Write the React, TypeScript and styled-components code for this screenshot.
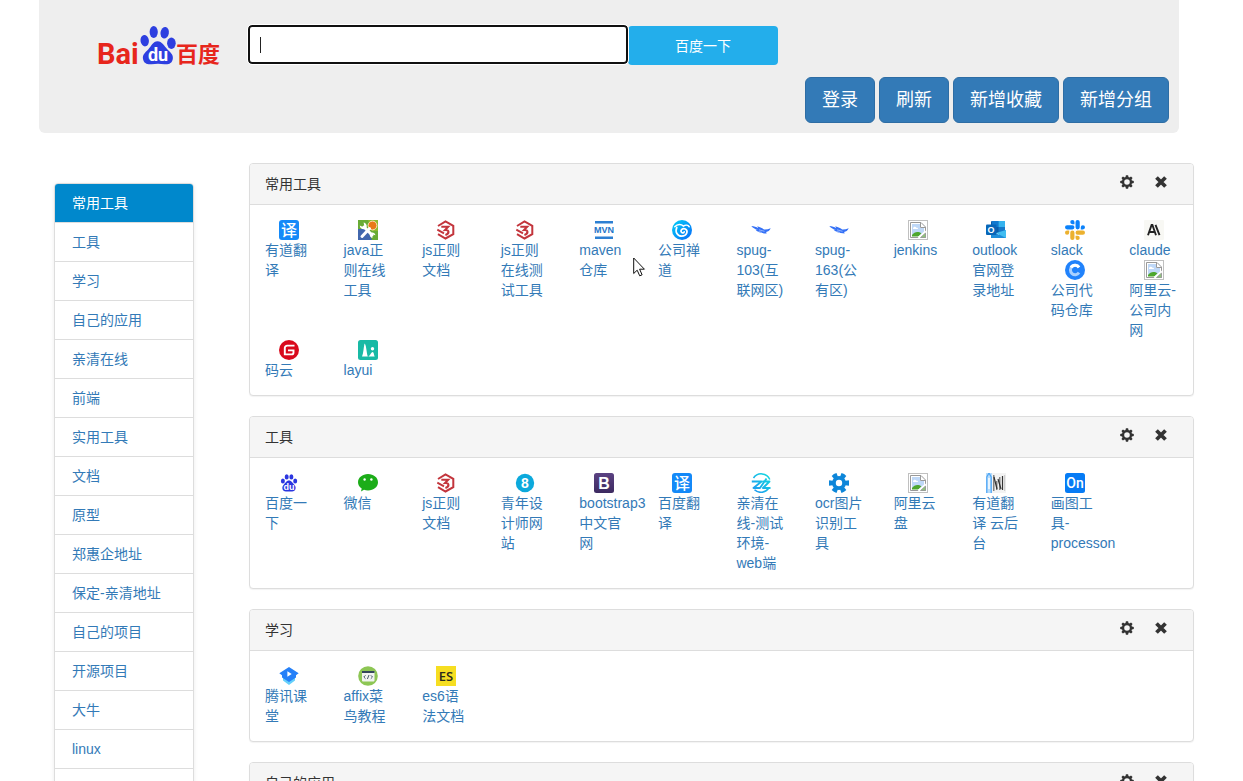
import React from "react";
import styled, { createGlobalStyle, css } from "styled-components";

const latin = `"Liberation Sans", Arial`;
const fontStack = `${latin}, "Noto Sans CJK SC", sans-serif`;
const cjk = `"Noto Sans CJK SC", sans-serif`;

const GlobalStyle = createGlobalStyle`
  *, *::before, *::after { box-sizing: border-box; }
  body {
    margin: 0;
    background: #fff;
    color: #333;
    font: 14px/20px ${fontStack};
  }
`;

const Page = styled.div`
  position: relative;
  height: 100vh;
  overflow: hidden;
  padding: 0 49px 0 24px;
`;

const Header = styled.header`
  margin: 0 15px;
  padding: 25px 10px 10px 56px;
  background: #eee;
  border-radius: 0 0 6px 6px;
`;

const TopRow = styled.div`
  display: flex;
  gap: 25px;
`;

const LogoLink = styled.a`
  flex: none;
  svg { display: block; }
`;

const SearchForm = styled.form`
  display: flex;
  flex: 0 1 530px;
  height: 40px;
`;

const Field = styled.div`
  position: relative;
  flex: 1;
  height: 39px;
`;

const SearchInput = styled.input`
  display: block;
  width: 100%;
  height: 100%;
  padding: 0 10px;
  border: 2px solid #101010;
  border-radius: 4px;
  outline: 1px solid #fff;
  background: #fff;
  font: 16px/20px ${fontStack};
`;

const Caret = styled.span`
  position: absolute;
  left: 12px;
  top: 12px;
  width: 1px;
  height: 16px;
  background: #222;
`;

const SearchButton = styled.button`
  align-self: flex-end;
  width: 150px;
  height: 39px;
  padding: 0;
  border: 0;
  border-radius: 4px;
  background: #23aeeb;
  color: #fff;
  font: 14px/20px ${fontStack};
`;

const Actions = styled.div`
  display: flex;
  justify-content: flex-end;
  gap: 4px;
  margin-top: 6px;
`;

const ActionButton = styled.button`
  padding: 10px 16px;
  border: 1px solid #2e6da4;
  border-radius: 6px;
  background: #337ab7;
  color: #fff;
  font: 18px/24px ${fontStack};
`;

const Content = styled.div`
  display: flex;
  align-items: flex-start;
  gap: 55px;
  padding: 30px 0 0 30px;
`;

const Sidebar = styled.nav`
  flex: none;
  width: 140px;
  margin-top: 20px;
`;

const NavList = styled.ul`
  margin: 0;
  padding: 0;
  list-style: none;
  border: 1px solid #ddd;
  border-radius: 4px;
  box-shadow: 0 1px 4px rgba(0, 0, 0, 0.08);
  overflow: hidden;
`;

const NavItem = styled.li`
  min-height: 39px;
  border-bottom: 1px solid #ddd;
`;

const NavLink = styled.a<{ $active?: boolean }>`
  display: block;
  padding: 9px 17px;
  color: #337ab7;
  text-decoration: none;
  ${(p) =>
    p.$active &&
    css`
      background: #0088cc;
      color: #fff;
    `}
`;

const Main = styled.main`
  flex: 1;
  min-width: 0;
`;

const Panel = styled.section`
  margin-bottom: 20px;
  border: 1px solid #ddd;
  border-radius: 4px;
  background: #fff;
  box-shadow: 0 1px 1px rgba(0, 0, 0, 0.05);
`;

const PanelHead = styled.div`
  display: flex;
  justify-content: space-between;
  padding: 10px 25px 10px 15px;
  border-bottom: 1px solid #ddd;
  border-radius: 3px 3px 0 0;
  background: #f5f5f5;
`;

const PanelTitle = styled.h3`
  margin: 0;
  font: 14px/20px ${fontStack};
  color: #333;
`;

const PanelTools = styled.div`
  display: flex;
  gap: 20px;
`;

const IconButton = styled.button`
  width: 14px;
  height: 16px;
  padding: 1px 0;
  border: 0;
  background: none;
  color: #333;
  svg { display: block; }
`;

const Shortcuts = styled.ul`
  display: flow-root;
  margin: 0;
  padding: 15px 0;
  list-style: none;
`;

const Shortcut = styled.li`
  float: left;
  width: calc(100% / 12);
  padding: 0 15px;
`;

const ShortcutLink = styled.a`
  display: block;
  color: #337ab7;
  text-decoration: none;
  svg {
    display: block;
    margin: 0 auto;
  }
`;

const Pointer = styled.svg`
  position: absolute;
  left: 633px;
  top: 257px;
`;

const Svg = ({ children }: { children: React.ReactNode }) => (
  <svg width="20" height="20" viewBox="0 0 20 20" aria-hidden="true">
    {children}
  </svg>
);

const Label = ({
  x = 10, y, size, fill = "#fff", family = latin, weight = 700, children,
}: {
  x?: number; y: number; size: number; fill?: string; family?: string; weight?: number; children: React.ReactNode;
}) => (
  <text x={x} y={y} fontSize={size} fill={fill} fontFamily={family} fontWeight={weight} textAnchor="middle">
    {children}
  </text>
);

const Translate = () => (
  <Svg>
    <rect width="20" height="20" rx="3" fill="#1489f8" />
    <Label y={16} size={16} family={cjk} weight={500}>译</Label>
  </Svg>
);

const Java = () => (
  <Svg>
    <rect width="20" height="20" fill="#68ab35" />
    <path d="M0 9h9l5 11H0z" fill="#4267ad" />
    <path d="M10 0h10v11h-6z" fill="#8dba2e" />
    <circle cx="14.5" cy="5.5" r="4.400" fill="#e97817" stroke="#ffe0b8" strokeWidth="1" />
    <path d="M6 7l8 8M11.500 8.500L4 16.500" stroke="#fff" strokeWidth="3" strokeLinecap="round" />
    <path d="M1.800 5.600c0 4 5 4.600 6.500 2.600 1.200-2.200 0-5-2.700-5.600l.6 2.900-1.800 1.300z" fill="#fff" />
    <path d="M14.500 18c-2.500-.5-3.400-3-2.200-4.700 1.700-1.600 4.800-.8 5.100 2l-2.500-.8-.8 1.300z" fill="#fff" />
  </Svg>
);

const JsRegex = () => (
  <Svg>
    <path d="M2 6L9.500 1.500l7.800 4.400v8.300l-7.800 4.300-7.500-4.300" fill="none" stroke="#c3353c" strokeWidth="2" />
    <path d="M1.300 9.600l6.700 3.800" stroke="#c3353c" strokeWidth="1.800" />
    <path d="M5.300 6.700h6.900l-3 3.200c4-.5 4.600 3.800.2 5" fill="none" stroke="#c3353c" strokeWidth="2.100" />
  </Svg>
);

const Maven = () => (
  <Svg>
    <path d="M1 2.300h18M1 17.700h18" stroke="#2d7fd2" strokeWidth="2.600" />
    <Label y={13} size={9}>
      <tspan fill="#2474c8">MVN</tspan>
    </Label>
  </Svg>
);

const Zentao = () => (
  <Svg>
    <defs>
      <linearGradient id="zentao" x1="0" y1="0" x2="1" y2="1">
        <stop offset="0" stopColor="#00d2f8" />
        <stop offset="1" stopColor="#0868f8" />
      </linearGradient>
    </defs>
    <circle cx="10" cy="10" r="10" fill="url(#zentao)" />
    <path d="M2.800 6.800c2.800-3.200 6.500-2.700 8.700-.7 2.200-1.600 4.700-.6 5.700.6" fill="none" stroke="#fff" strokeWidth="1.500" strokeLinecap="round" />
    <path d="M4.800 7.500C2.800 12 5.400 16.200 9.700 16.200c5.300 0 6.800-5.400 3.600-7.200-2.700-1.200-5.300 1.200-3.800 3.300.9 1 2.500.6 2.700-.5" fill="none" stroke="#fff" strokeWidth="1.700" strokeLinecap="round" />
  </Svg>
);

const Spug = () => (
  <Svg>
    <path d="M.3 6c3 .4 4.800.9 7 2.200L6.200 6.300c3.200.9 5.300 2.100 7 3.200 2.300.1 4.200-.3 6.500-1.200-1 2.500-2.600 3.400-4.600 3.700l.6 1.600C10 13.300 6.200 11.700 4.500 9.800l2.500.3C4.600 9.200 2 8.400.3 6z" fill="#3571f6" />
    <path d="M8 9.800l5.500 1.500M7.500 11.500l3.500.9" stroke="#b7ceff" strokeWidth=".7" />
  </Svg>
);

const BrokenImage = () => (
  <Svg>
    <rect x=".5" y=".5" width="19" height="19" fill="#fff" stroke="#c0c0c0" />
    <path d="M2.500 2.500h10.500l4.500 4.500v10.500h-15z" fill="#fff" stroke="#999" />
    <path d="M4 4h8v4h4v8H4z" fill="#bfd8f7" />
    <path d="M5 8.500c0-2 2.800-2.400 3.300-.8 1.300-.3 1.800.5 1.700 1.300H5z" fill="#fff" />
    <path d="M4 16.500V15c2.500-3.500 6.500-3.700 9.500-1.500l-3 3z" fill="#4ea72e" />
    <path d="M12.500 3v4.500H17" fill="none" stroke="#999" />
    <path d="M10.500 18L18 11.500" stroke="#fff" strokeWidth="2.400" />
    <path d="M12.500 17.500l5-4.500v4.500z" fill="#8fc47a" stroke="#999" strokeWidth=".8" />
  </Svg>
);

const Outlook = () => (
  <Svg>
    <rect x="5" y="1" width="14" height="12" rx="1" fill="#0a5ca8" />
    <path d="M6 1h6.500v6H6z" fill="#1279cf" />
    <path d="M12.500 1H19v6h-6.500z" fill="#35b3ef" />
    <path d="M12.500 7H19v5h-6.500z" fill="#1678c9" />
    <path d="M5 18h15v-8l-7.500 4.500L5 11z" fill="#1d8dd9" />
    <path d="M20 10v8L10 13z" fill="#41bdf1" />
    <rect x="0" y="4.500" width="10.500" height="10.500" rx="1" fill="#0866b8" />
    <Label x={5} y={13} size={9}>O</Label>
  </Svg>
);

const Slack = () => (
  <svg width="20" height="20" viewBox="0 0 24 24" aria-hidden="true">
    <path fill="#0b82fb" d="M8.834 5.042a2.528 2.528 0 0 1-2.521-2.520A2.528 2.528 0 0 1 8.834 0a2.528 2.528 0 0 1 2.521 2.522v2.520H8.834zM8.834 6.313a2.528 2.528 0 0 1 2.521 2.521 2.528 2.528 0 0 1-2.521 2.521H2.522A2.528 2.528 0 0 1 0 8.834a2.528 2.528 0 0 1 2.522-2.521h6.312zM18.956 8.834a2.528 2.528 0 0 1 2.522-2.521A2.528 2.528 0 0 1 24 8.834a2.528 2.528 0 0 1-2.522 2.521h-2.522V8.834zM17.688 8.834a2.528 2.528 0 0 1-2.523 2.521 2.527 2.527 0 0 1-2.520-2.521V2.522A2.527 2.527 0 0 1 15.165 0a2.528 2.528 0 0 1 2.523 2.522v6.312z" />
    <path fill="#ecb12f" d="M5.042 15.165a2.528 2.528 0 0 1-2.520 2.523A2.528 2.528 0 0 1 0 15.165a2.527 2.527 0 0 1 2.522-2.520h2.520v2.520zM6.313 15.165a2.527 2.527 0 0 1 2.521-2.520 2.527 2.527 0 0 1 2.521 2.520v6.313A2.528 2.528 0 0 1 8.834 24a2.528 2.528 0 0 1-2.521-2.522v-6.313zM15.165 18.956a2.528 2.528 0 0 1 2.523 2.522A2.528 2.528 0 0 1 15.165 24a2.527 2.527 0 0 1-2.520-2.522v-2.522h2.520zM15.165 17.688a2.527 2.527 0 0 1-2.520-2.523 2.526 2.526 0 0 1 2.520-2.520h6.313A2.527 2.527 0 0 1 24 15.165a2.528 2.528 0 0 1-2.522 2.523h-6.313z" />
  </svg>
);

const Claude = () => (
  <Svg>
    <rect width="20" height="20" rx="1" fill="#f8f8f4" />
    <path d="M4 15.200L7.600 5h.8L12 15.200M5.500 12h5M11.500 4.800l4 10.400" fill="none" stroke="#222" strokeWidth="1.900" />
  </Svg>
);

const CodeRepo = () => (
  <Svg>
    <circle cx="10" cy="10" r="10" fill="#2182fb" />
    <path d="M14 7.300A4.700 4.700 0 1 0 14 12.700" fill="none" stroke="#a9d0ff" strokeWidth="3" />
    <path d="M14 7.300A4.700 4.700 0 0 0 6 7.600" fill="none" stroke="#fff" strokeWidth="3" />
  </Svg>
);

const Gitee = () => (
  <Svg>
    <circle cx="10" cy="10" r="10" fill="#d90a1c" />
    <path d="M15.500 5.600H8.200A2.400 2.400 0 0 0 5.800 8v6.400h6.700a2 2 0 0 0 2-2v-2H9" fill="none" stroke="#fff" strokeWidth="1.900" />
  </Svg>
);

const Layui = () => (
  <Svg>
    <rect width="20" height="20" rx="2.500" fill="#18baa5" />
    <path d="M4 16.500C5.500 13 5.500 8 6.500 3.500 8.500 5 8.300 12 9.800 16.500z" fill="#fff" />
    <circle cx="14.500" cy="8.800" r="1.700" fill="#fff" />
    <path d="M10 16.500c2.500-.5 3-4.500 4.500-4.500s1.300 3 2.300 4.500z" fill="#fff" />
  </Svg>
);

const BaiduPaw = () => (
  <Svg>
    <g fill="#2b36e0">
      <ellipse cx="3.900" cy="8" rx="2" ry="2.600" />
      <ellipse cx="7.700" cy="3.900" rx="2" ry="2.700" />
      <ellipse cx="12.400" cy="3.900" rx="2" ry="2.700" />
      <ellipse cx="16.200" cy="8" rx="2" ry="2.600" />
      <path d="M10 7.600c2.700 0 3.500 2.600 5.300 4.200 2.400 2.200 1.500 6.700-2.200 6.700H6.900c-3.700 0-4.600-4.500-2.200-6.700C6.500 10.200 7.300 7.600 10 7.600z" />
    </g>
    <Label y={17} size={9}>du</Label>
  </Svg>
);

const Wechat = () => (
  <Svg>
    <path d="M10 1c5.700 0 10 3.600 10 8.300s-4.300 8.200-10 8.200c-1.400 0-2.800-.2-4-.7L3 18.500l.7-3C1.300 14 0 11.800 0 9.300 0 4.600 4.400 1 10 1z" fill="#1cad19" />
    <circle cx="6.600" cy="6.500" r="1.200" fill="#fff" />
    <circle cx="13.400" cy="6.500" r="1.200" fill="#fff" />
  </Svg>
);

const Eight = () => (
  <Svg>
    <circle cx="10" cy="10" r="9.200" fill="#0ca9dc" />
    <Label y={15} size={14}>8</Label>
  </Svg>
);

const Bootstrap = () => (
  <Svg>
    <defs>
      <linearGradient id="bootstrap" x1="0" y1="0" x2="0" y2="1">
        <stop offset="0" stopColor="#5b4282" />
        <stop offset="1" stopColor="#3c2a60" />
      </linearGradient>
    </defs>
    <rect width="20" height="20" rx="2.500" fill="url(#bootstrap)" />
    <Label y={16} size={16}>B</Label>
  </Svg>
);

const Qinqing = () => (
  <Svg>
    <defs>
      <linearGradient id="qinqing" gradientUnits="userSpaceOnUse" x1="20" y1="0" x2="0" y2="20">
        <stop offset="0" stopColor="#10e0dc" />
        <stop offset="1" stopColor="#2090f4" />
      </linearGradient>
    </defs>
    <g fill="none" stroke="url(#qinqing)">
      <path d="M2.500 5A9.300 9.300 0 0 1 18.800 6.500M17.500 15.500A9.300 9.300 0 0 1 3.500 16.700" strokeWidth="1.500" />
      <path d="M.8 8.500h9.700L2.500 15h6.500L15.500 5.500M11.500 8.500h7L12 15h7.500" strokeWidth="1.900" strokeLinejoin="round" />
    </g>
  </Svg>
);

const gearTeeth = (n: number) => Array.from({ length: n }, (_, i) => (360 / n) * i);

const OcrGear = () => (
  <Svg>
    <g fill="#0d86d9">
      {gearTeeth(6).map((a) => (
        <path key={a} d="M8 5L7.200 .2Q10-.6 12.800 .2L12 5z" transform={`rotate(${a + 30} 10 10)`} />
      ))}
    </g>
    <circle cx="10" cy="10" r="5.100" fill="#fff" stroke="#0d86d9" strokeWidth="3.800" />
  </Svg>
);

const YoudaoCloud = () => (
  <Svg>
    <path d="M0 0h6v20H0z" fill="#b7dcfb" />
    <path d="M.8 20V4L3 0l2.200 4v16" fill="none" stroke="#4ea6f5" strokeWidth="1.200" />
    <path d="M3 5v11" stroke="#fff" strokeWidth="1.400" />
    <path d="M6 0h14v20H6z" fill="#f3f3f3" />
    <path d="M7.800 2v16M10.800 8v9M13.800 4v13" stroke="#666" strokeWidth="1.200" />
    <path d="M8 4l3 12M12 6l3 10M16.500 3v14" stroke="#333" strokeWidth="1.200" />
    <path d="M18.700 2v16" stroke="#c4c4c4" />
  </Svg>
);

const ProcessOn = () => (
  <Svg>
    <rect width="20" height="20" rx="2.500" fill="#067bf5" />
    <Label y={15} size={14} family="Roboto, sans-serif" weight={500}>On</Label>
  </Svg>
);

const TencentClass = () => (
  <Svg>
    <path d="M4 12v2.500l6 4.500 6-4.500V12z" fill="#65d0fb" />
    <path d="M10 1l9.700 6.200-2.700 2v2.300L10 16l-7-4.500V9.200L.3 7.200z" fill="#2580f8" />
    <path d="M8.400 5.200l4.300 2.800-4.300 2.800z" fill="#fff" />
  </Svg>
);

const Affix = () => (
  <Svg>
    <circle cx="10" cy="10" r="9.800" fill="#8dc654" />
    <rect x="4" y="5" width="12.500" height="10.500" rx="1" fill="#f1f4f0" />
    <path d="M4 5h12.500v2H4z" fill="#33475a" />
    <path d="M7.500 9.300L5.800 11l1.700 1.700M12.800 9.300l1.700 1.700-1.700 1.700M11 9l-1.600 4" fill="none" stroke="#33475a" strokeWidth=".9" />
  </Svg>
);

const Es6 = () => (
  <Svg>
    <rect width="20" height="20" fill="#f6de21" />
    <Label y={15} size={13} fill="#2b2a1c" weight={600} family={`"Open Sans", sans-serif`}>ES</Label>
  </Svg>
);

const GearGlyph = () => (
  <svg width="14" height="14" viewBox="0 0 14 14" aria-hidden="true">
    <g fill="currentColor">
      {gearTeeth(8).map((a) => (
        <path key={a} d="M5.300 3L5.900 .2h2.200L8.700 3z" transform={`rotate(${a} 7 7)`} />
      ))}
    </g>
    <circle cx="7" cy="7" r="3.900" fill="none" stroke="currentColor" strokeWidth="2.200" />
  </svg>
);

const RemoveGlyph = () => (
  <svg width="14" height="14" viewBox="0 0 14 14" aria-hidden="true">
    <path d="M2.500 2.500l9 9M11.500 2.500l-9 9" stroke="currentColor" strokeWidth="3.800" />
  </svg>
);

const BaiduLogo = () => (
  <svg width="128" height="46" viewBox="-4 0 128 46" aria-hidden="true">
    <text x="-2" y="39" fontSize="29" fontWeight="700" fontFamily="Roboto, sans-serif" fill="#e7261c">Bai</text>
    <text x="77" y="37" fontSize="22" fontWeight="700" fontFamily={cjk} fill="#e7261c">百度</text>
    <g fill="#2d3fe0">
      <ellipse cx="45.700" cy="15.700" rx="4.200" ry="5.700" transform="rotate(-8 45.700 15.700)" />
      <ellipse cx="54.700" cy="7" rx="4.100" ry="6" />
      <ellipse cx="65.700" cy="7.700" rx="4.200" ry="5.800" transform="rotate(10 65.700 7.700)" />
      <ellipse cx="72.400" cy="18.300" rx="4.300" ry="5.700" />
      <path d="M58.500 16.300c4.500 0 6.500 4.700 10 8.200 3.500 3.300 6 5.500 5.300 9.500-.8 4.500-4.300 5.700-8.300 5.200-4.500-.7-8.500-.7-13 0-4 .5-7.700-.7-8.500-5.200-.7-4 1.800-6.200 5.200-9.500 3.300-3.500 4.800-8.200 9.300-8.200z" />
    </g>
    <text x="59" y="36" fontSize="18" fontWeight="700" fontFamily="Roboto, sans-serif" fill="#fff" textAnchor="middle">du</text>
  </svg>
);

type Item = [string, React.FC];

const groups: { title: string; items: Item[] }[] = [
  {
    title: "常用工具",
    items: [
      ["有道翻译", Translate],
      ["java正则在线工具", Java],
      ["js正则文档", JsRegex],
      ["js正则在线测试工具", JsRegex],
      ["maven仓库", Maven],
      ["公司禅道", Zentao],
      ["spug-103(互联网区)", Spug],
      ["spug-163(公有区)", Spug],
      ["jenkins", BrokenImage],
      ["outlook官网登录地址", Outlook],
      ["slack", Slack],
      ["claude", Claude],
      ["公司代码仓库", CodeRepo],
      ["阿里云-公司内网", BrokenImage],
      ["码云", Gitee],
      ["layui", Layui],
    ],
  },
  {
    title: "工具",
    items: [
      ["百度一下", BaiduPaw],
      ["微信", Wechat],
      ["js正则文档", JsRegex],
      ["青年设计师网站", Eight],
      ["bootstrap3中文官网", Bootstrap],
      ["百度翻译", Translate],
      ["亲清在线-测试环境-web端", Qinqing],
      ["ocr图片识别工具", OcrGear],
      ["阿里云盘", BrokenImage],
      ["有道翻译 云后台", YoudaoCloud],
      ["画图工具-processon", ProcessOn],
    ],
  },
  {
    title: "学习",
    items: [
      ["腾讯课堂", TencentClass],
      ["affix菜鸟教程", Affix],
      ["es6语法文档", Es6],
    ],
  },
  { title: "自己的应用", items: [] },
];

const navItems = [
  "常用工具", "工具", "学习", "自己的应用", "亲清在线", "前端", "实用工具", "文档",
  "原型", "郑惠企地址", "保定-亲清地址", "自己的项目", "开源项目", "大牛", "linux",
];

export default function App() {
  return (
    <Page>
      <GlobalStyle />
      <Header>
        <TopRow>
          <LogoLink href="#" aria-label="百度">
            <BaiduLogo />
          </LogoLink>
          <SearchForm onSubmit={(e) => e.preventDefault()}>
            <Field>
              <SearchInput type="text" aria-label="百度一下" />
              <Caret />
            </Field>
            <SearchButton type="submit">百度一下</SearchButton>
          </SearchForm>
        </TopRow>
        <Actions>
          {["登录", "刷新", "新增收藏", "新增分组"].map((label) => (
            <ActionButton key={label} type="button">{label}</ActionButton>
          ))}
        </Actions>
      </Header>
      <Content>
        <Sidebar>
          <NavList>
            {navItems.map((label, i) => (
              <NavItem key={label}>
                <NavLink href="#" $active={i === 0}>{label}</NavLink>
              </NavItem>
            ))}
            <NavItem />
          </NavList>
        </Sidebar>
        <Main>
          {groups.map((group) => (
            <Panel key={group.title}>
              <PanelHead>
                <PanelTitle>{group.title}</PanelTitle>
                <PanelTools>
                  <IconButton type="button" aria-label="设置"><GearGlyph /></IconButton>
                  <IconButton type="button" aria-label="删除"><RemoveGlyph /></IconButton>
                </PanelTools>
              </PanelHead>
              <Shortcuts>
                {group.items.map(([label, Icon]) => (
                  <Shortcut key={label}>
                    <ShortcutLink href="#">
                      <Icon />
                      {label}
                    </ShortcutLink>
                  </Shortcut>
                ))}
              </Shortcuts>
            </Panel>
          ))}
        </Main>
      </Content>
      <Pointer width="14" height="21" viewBox="0 0 14 21" aria-hidden="true">
        <path d="M.7 1v15.500l3.500-3.300 2.500 5.600 2.400-1-2.500-5.600h4.800z" fill="#fff" stroke="#111" strokeWidth="1" />
      </Pointer>
    </Page>
  );
}
